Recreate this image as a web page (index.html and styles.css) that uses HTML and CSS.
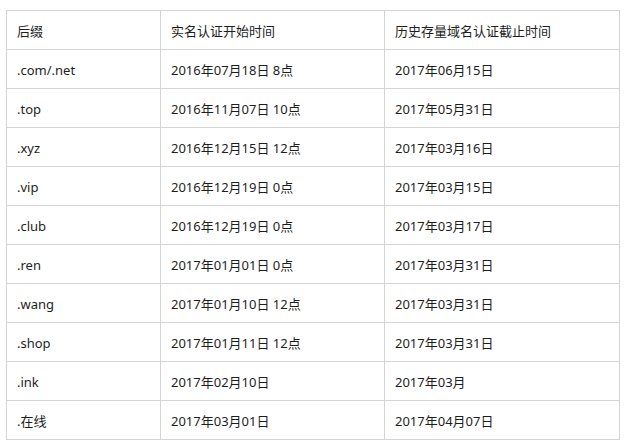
FILE: index.html
```html
<!DOCTYPE html>
<html lang="zh-CN">
<head>
<meta charset="utf-8">
<title>域名实名认证时间</title>
<link rel="stylesheet" href="styles.css">
</head>
<body>
<div class="wrap">
<table class="tbl">
<colgroup><col class="c1"><col class="c2"><col class="c3"></colgroup>
<tr><td>后缀</td><td>实名认证开始时间</td><td>历史存量域名认证截止时间</td></tr>
<tr><td>.com/.net</td><td>2016年07月18日 8点</td><td>2017年06月15日</td></tr>
<tr><td>.top</td><td>2016年11月07日 10点</td><td>2017年05月31日</td></tr>
<tr><td>.xyz</td><td>2016年12月15日 12点</td><td>2017年03月16日</td></tr>
<tr><td>.vip</td><td>2016年12月19日 0点</td><td>2017年03月15日</td></tr>
<tr><td>.club</td><td>2016年12月19日 0点</td><td>2017年03月17日</td></tr>
<tr><td>.ren</td><td>2017年01月01日 0点</td><td>2017年03月31日</td></tr>
<tr><td>.wang</td><td>2017年01月10日 12点</td><td>2017年03月31日</td></tr>
<tr><td>.shop</td><td>2017年01月11日 12点</td><td>2017年03月31日</td></tr>
<tr><td>.ink</td><td>2017年02月10日</td><td>2017年03月</td></tr>
<tr><td>.在线</td><td>2017年03月01日</td><td>2017年04月07日</td></tr>
</table>
</div>
</body>
</html>
```
FILE: styles.css
```css
html, body { margin: 0; padding: 0; background: #fff; }
.wrap { padding: 10px 0 0 6px; }
.tbl {
  border-collapse: collapse;
  table-layout: fixed;
  width: 613px;
  font-family: "Noto Sans", "Noto Sans CJK SC", sans-serif;
  font-size: 13px;
  color: #1e1e1e;
}
.c1 { width: 154px; }
.c2 { width: 224px; }
.c3 { width: 235px; }
.tbl td {
  border: 1px solid #d4d4d4;
  height: 38px;
  padding: 1px 0 0 10px;
  box-sizing: border-box;
  line-height: 18px;
  vertical-align: middle;
  white-space: nowrap;
}
.tbl tr { height: 39px; }
```
